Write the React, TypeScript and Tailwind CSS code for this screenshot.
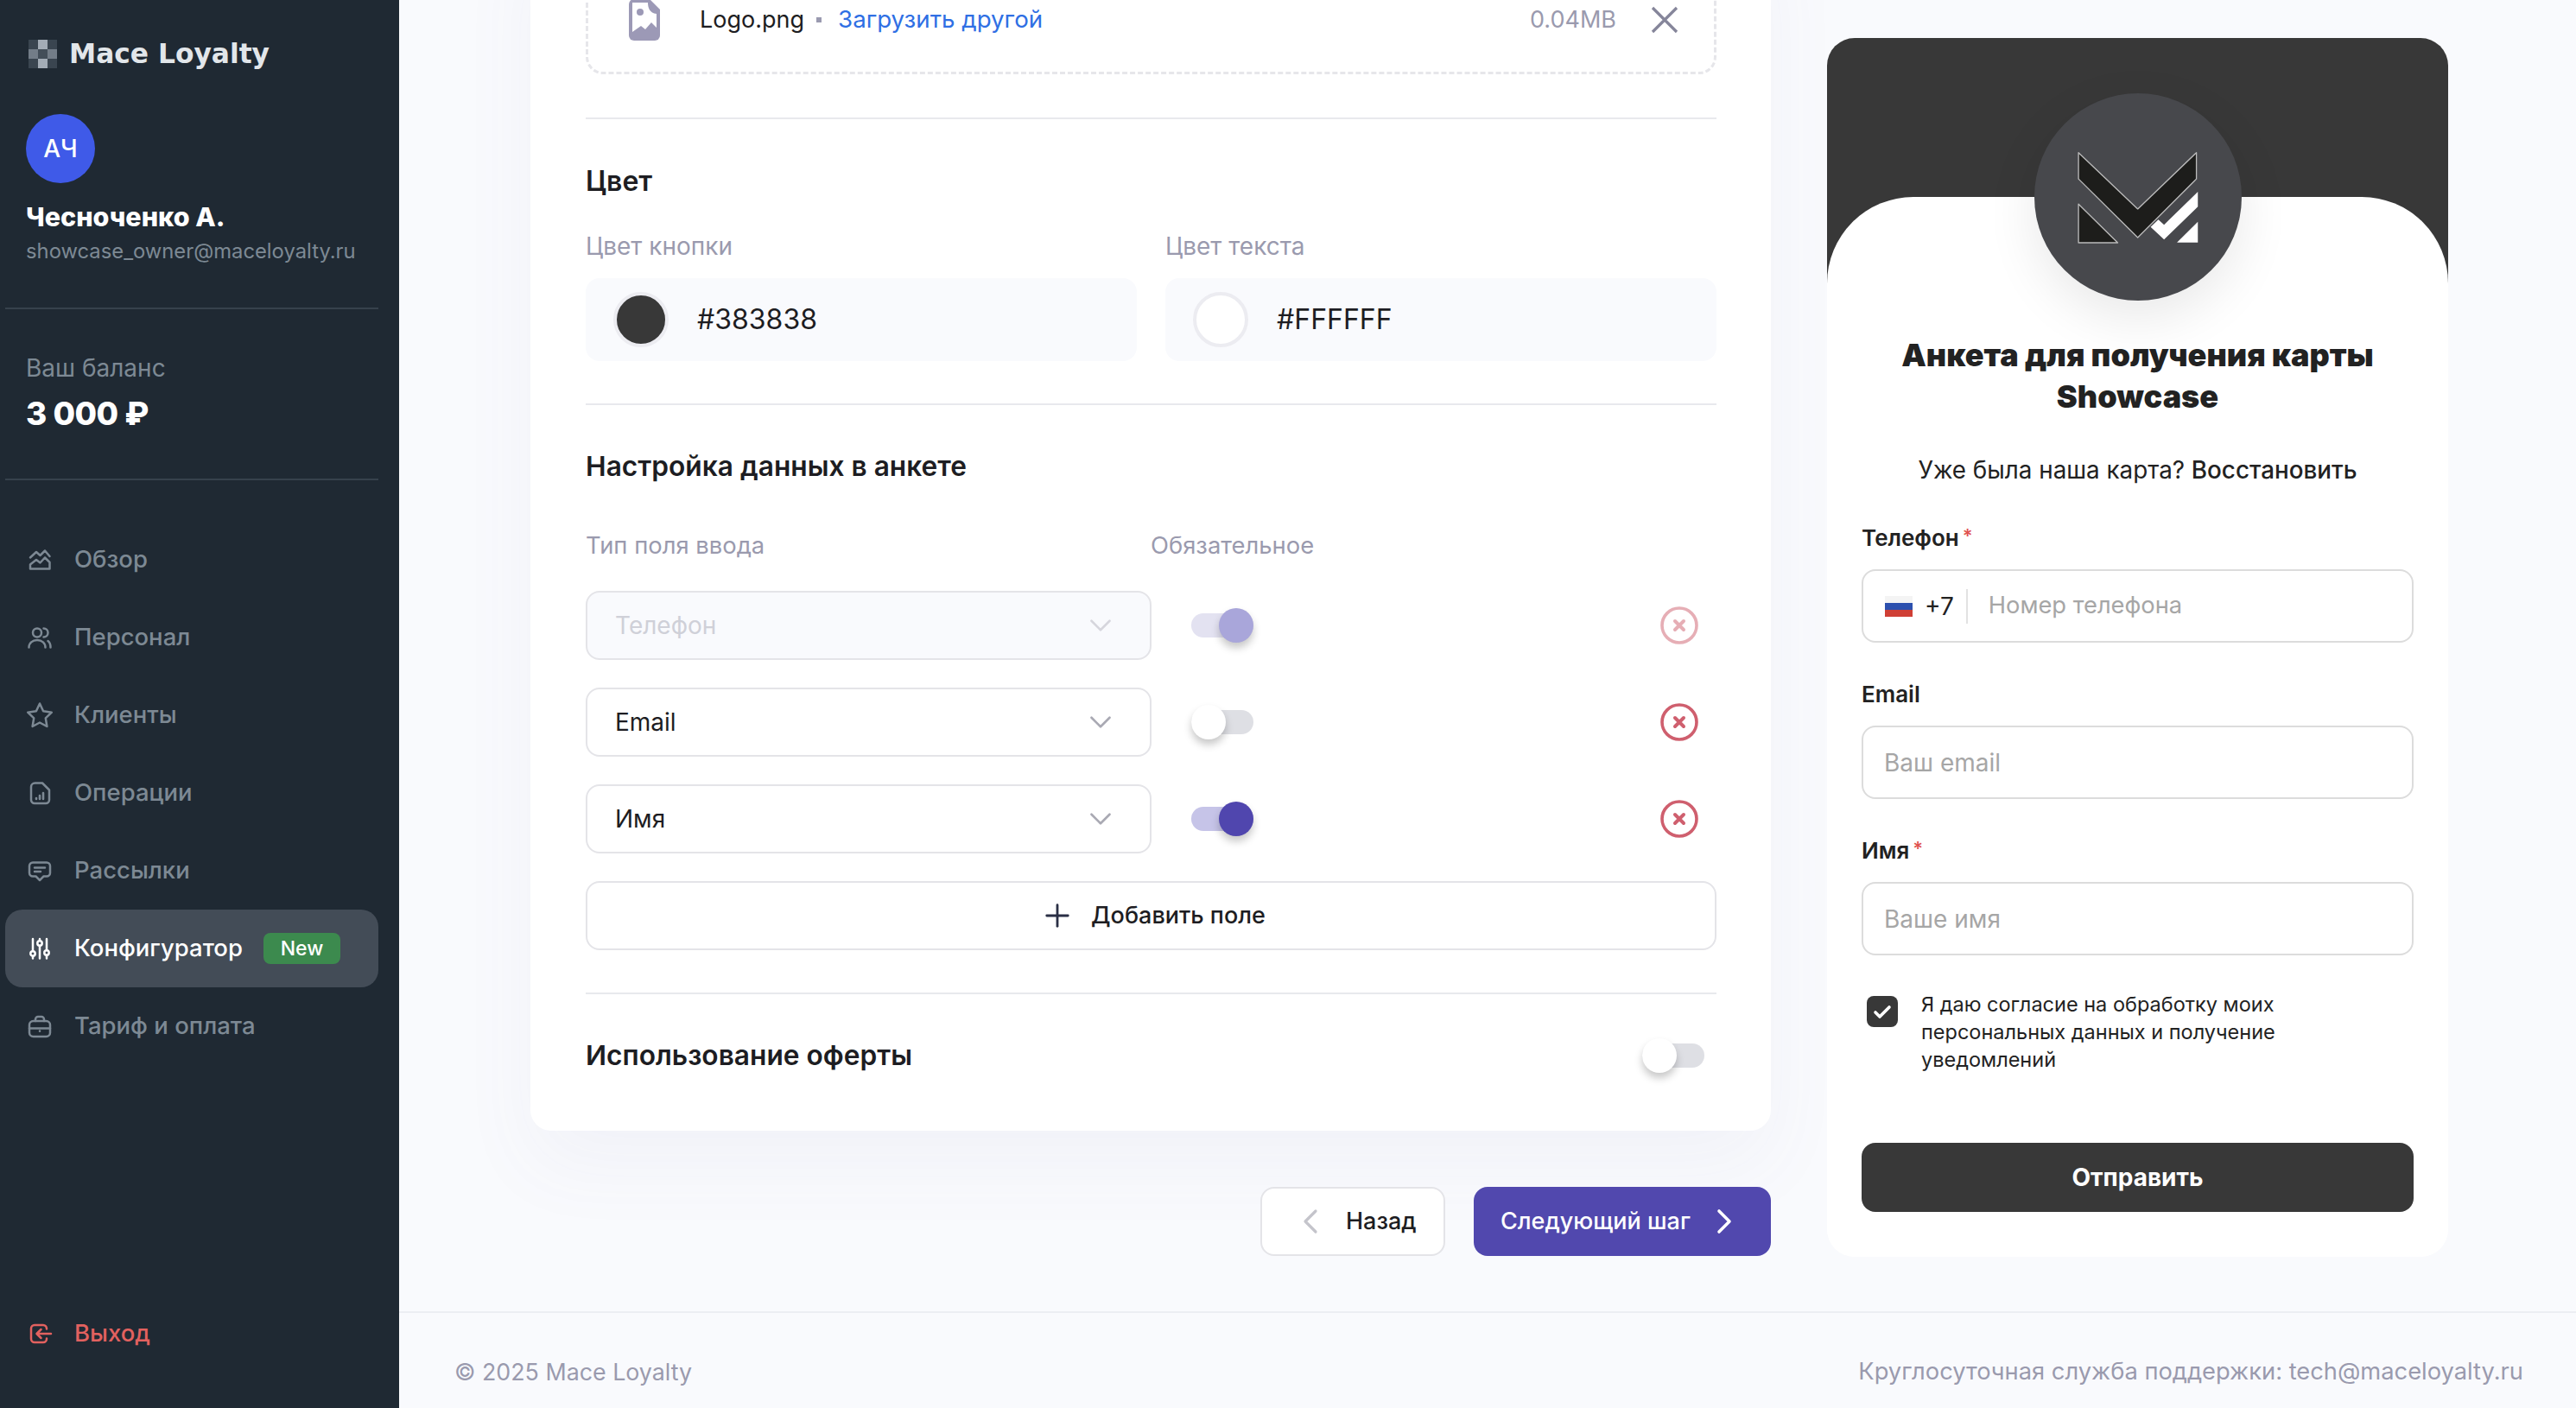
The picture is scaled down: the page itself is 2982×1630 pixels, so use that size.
import { ChevronDown, ChevronLeft, ChevronRight, Plus } from "lucide-react";
import type { ReactNode } from "react";

const IconBox = ({ children, className }: { children: ReactNode; className?: string }) => (
  <svg
    viewBox="0 0 28 28"
    fill="none"
    stroke="currentColor"
    strokeWidth="2.5"
    strokeLinecap="round"
    strokeLinejoin="round"
    className={`w-[28px] h-[28px] shrink-0 overflow-visible ${className ?? ""}`}
  >
    {children}
  </svg>
);

const navItems = [
  {
    label: "Обзор",
    icon: (
      <>
        <path d="M3 11.5l7-6.5 4.5 4L20 3.5l5.5 6.5" />
        <path d="M3 24.5h22.5V17l-5.5-5.5-5.5 6-4.5-3.5L3 19.5z" />
      </>
    ),
  },
  {
    label: "Персонал",
    icon: (
      <>
        <circle cx="11" cy="8.5" r="5" />
        <path d="M1.5 25.5c0-5 4-8.500 9.500-8.500s9.500 3.500 9.500 8.500" />
        <path d="M18.500 3.500a5 5 0 0 1 0 10" />
        <path d="M23.500 18c2 1.500 3 4 3 7.500" />
      </>
    ),
  },
  {
    label: "Клиенты",
    icon: <path d="M14 .5l4.100 8.800 9.700 1.400-7 6.700 1.600 9.600L14 22.500l-8.400 4.500 1.600-9.600-7-6.700 9.700-1.400z" />,
  },
  {
    label: "Операции",
    icon: (
      <>
        <path d="M8.500 2.500h8.500l8 8V22a4 4 0 0 1-4 4H8a4 4 0 0 1-4-4V7a4.500 4.500 0 0 1 4.500-4.500z" />
        <path d="M10 21v-1M14 21v-4M18 21v-7" strokeWidth="2.600" />
      </>
    ),
  },
  {
    label: "Рассылки",
    icon: (
      <>
        <path d="M6 4.500h16a4 4 0 0 1 4 4v8a4 4 0 0 1-4 4h-3.500L14 25l-4.500-4.500H6a4 4 0 0 1-4-4v-8a4 4 0 0 1 4-4z" />
        <path d="M8 10.500h12M8 15h7" />
      </>
    ),
  },
  {
    label: "Конфигуратор",
    active: true,
    icon: (
      <>
        <path d="M6 3v14M6 23v2.500M14 3v1M14 11v14.500M22 3v13M22 22v3.500" />
        <circle cx="6" cy="20" r="2.700" />
        <circle cx="14" cy="8" r="2.700" />
        <circle cx="22" cy="19" r="2.700" />
      </>
    ),
  },
  {
    label: "Тариф и оплата",
    icon: (
      <>
        <rect x="2" y="8" width="24" height="18" rx="4.500" />
        <path d="M9 8V6a3 3 0 0 1 3-3h4a3 3 0 0 1 3 3v2M2 16.500h24" />
        <path d="M14 19.500v.2" />
      </>
    ),
  },
];

const logoCells = [
  "bg-[#3a4550]", "bg-[#a3acb6]", "bg-[#3a4550]",
  "bg-[#737d88]", "bg-[#434e59]", "bg-[#737d88]",
  "bg-[#3a4550]", "bg-[#a3acb6]", "bg-[#3a4550]",
];

const Sidebar = () => (
  <aside className="w-[462px] h-full shrink-0 flex flex-col bg-[#1f2933]">
    <div className="ml-[33px] mt-[44px] h-[36px] flex items-center gap-[14px]">
      <div className="grid grid-cols-3 w-[33px] h-[33px]">
        {logoCells.map((cell, i) => (
          <div key={i} className={cell} />
        ))}
      </div>
      <span className="font-['DejaVu_Sans',sans-serif] text-[31.3px] font-bold text-[#e2e6ea]">Mace Loyalty</span>
    </div>
    <div className="ml-[30px] mt-[52px] w-[80px] h-[80px] rounded-full bg-[#3f5ae8] flex items-center justify-center text-[28px] font-medium text-white">
      АЧ
    </div>
    <div className="ml-[30px] mt-[20px] text-[30.5px] leading-[38px] font-extrabold text-white">Чесноченко А.</div>
    <div className="ml-[30px] mt-[6px] text-[23.8px] leading-[30px] text-[#7d8994]">showcase_owner@maceloyalty.ru</div>
    <div className="ml-[6px] mt-[50px] w-[432px] h-[2px] bg-[#36414c]" />
    <div className="ml-[30px] mt-[50px] text-[28px] leading-[36px] text-[#7d8994]">Ваш баланс</div>
    <div className="ml-[30px] mt-[12px] text-[37px] leading-[46px] font-extrabold tracking-[-0.5px] text-white">3 000 ₽</div>
    <div className="ml-[6px] mt-[52px] w-[432px] h-[2px] bg-[#36414c]" />
    <nav className="mt-[47px] flex flex-col">
      {navItems.map((item) => (
        <div
          key={item.label}
          className={`ml-[6px] w-[432px] h-[90px] pl-[26px] flex items-center gap-[26px] rounded-[20px] text-[27.5px] font-medium ${
            item.active ? "bg-[#434c57] text-white" : "text-[#7d8994]"
          }`}
        >
          <IconBox>{item.icon}</IconBox>
          <span>{item.label}</span>
          {item.active && (
            <span className="ml-[-2px] h-[36px] w-[89px] rounded-[8px] bg-[#3c8a4e] flex items-center justify-center text-[23px] text-white">
              New
            </span>
          )}
        </div>
      ))}
    </nav>
    <div className="mt-auto mb-[41px] ml-[6px] h-[90px] pl-[26px] flex items-center gap-[26px] text-[27.5px] font-medium text-[#e2615f]">
      <IconBox>
        <path d="M22 8.500V8a4 4 0 0 0-4-4H8a4 4 0 0 0-4 4v12a4 4 0 0 0 4 4h10a4 4 0 0 0 4-4v-.500" />
        <path d="M27 14H11M15.500 9l-5 5 5 5" />
      </IconBox>
      <span>Выход</span>
    </div>
  </aside>
);

const FileIcon = () => (
  <svg viewBox="0 0 36 48" className="w-[36px] h-[48px] shrink-0">
    <path fill="#9c99b6" d="M6 0h18l12 12v30a6 6 0 0 1-6 6H6a6 6 0 0 1-6-6V6a6 6 0 0 1 6-6z" />
    <path fill="#fff" d="M4 4h18c0 6 2 12 10 13v16l-6-6-7 8-5-4-10 7z" />
    <circle cx="13" cy="15" r="4" fill="#9c99b6" />
  </svg>
);

const Toggle = ({ state }: { state: "on" | "off" | "disabled" }) => (
  <div className="relative w-[72px] h-[40px] shrink-0">
    <div
      className={`absolute left-0 right-0 top-[6px] h-[28px] rounded-full ${
        state === "on" ? "bg-[#c6c4e8]" : state === "disabled" ? "bg-[#e3e2f1]" : "bg-[#dedfe4]"
      }`}
    />
    <div
      className={`absolute top-0 w-[40px] h-[40px] rounded-full shadow-[0_6px_10px_rgba(0,0,0,0.22)] ${
        state === "on"
          ? "right-0 bg-[#5046ae]"
          : state === "disabled"
            ? "right-0 bg-[#a9a6da]"
            : "left-0 bg-white"
      }`}
    />
  </div>
);

const RemoveIcon = ({ faded }: { faded?: boolean }) => (
  <svg
    viewBox="0 0 44 44"
    fill="none"
    stroke="#cf5f6e"
    strokeWidth="3.6"
    strokeLinecap="round"
    className={`w-[44px] h-[44px] shrink-0 ${faded ? "opacity-50" : ""}`}
  >
    <circle cx="22" cy="22" r="20" />
    <path d="M17 17l10 10M27 17L17 27" strokeWidth="4" />
  </svg>
);

const fieldRows: { label: string; toggle: "on" | "off" | "disabled"; disabled?: boolean }[] = [
  { label: "Телефон", toggle: "disabled", disabled: true },
  { label: "Email", toggle: "off" },
  { label: "Имя", toggle: "on" },
];

const Divider = ({ className }: { className: string }) => <div className={`h-[2px] bg-[#e8e9ed] ${className}`} />;

const SettingsCard = () => (
  <div className="mt-[-100px] w-[1436px] rounded-[24px] bg-white pl-[64px] pr-[63px] pt-[64px] pb-[67px] shadow-[0_40px_90px_rgba(90,90,150,0.05)]">
    <div className="h-[122px] pt-[32px] pl-[47px] pr-[41px] flex items-start rounded-[20px] border-[3px] border-dashed border-[#e6e6ea]">
      <div className="w-full h-[48px] flex items-center text-[28px]">
        <FileIcon />
        <span className="ml-[46px] text-[27px] text-[#1d1d22]">Logo.png</span>
        <span className="ml-[14px] w-[6px] h-[6px] bg-[#9a9ab0]" />
        <span className="ml-[19px] text-[27.7px] text-[#2f6fe4]">Загрузить другой</span>
        <span className="ml-auto text-[27px] text-[#9a9aae]">0.04MB</span>
        <svg viewBox="0 0 32 32" fill="none" stroke="#85859a" strokeWidth="3.200" className="ml-[40px] w-[32px] h-[32px]">
          <path d="M2 2l28 28M30 2L2 30" />
        </svg>
      </div>
    </div>
    <Divider className="mt-[50px]" />
    <h2 className="mt-[52px] text-[32px] leading-[40px] font-semibold text-[#1d1d22]">Цвет</h2>
    <div className="mt-[38px] grid grid-cols-2 gap-x-[33px] text-[28px] leading-[34px] text-[#9a9aae]">
      <span>Цвет кнопки</span>
      <span>Цвет текста</span>
    </div>
    <div className="mt-[20px] grid grid-cols-2 gap-x-[33px]">
      {[
        { value: "#383838", swatch: "bg-[#383838]" },
        { value: "#FFFFFF", swatch: "bg-white" },
      ].map((color) => (
        <div key={color.value} className="h-[96px] px-[32px] flex items-center gap-[33px] rounded-[16px] bg-[#f9fafd]">
          <div className={`w-[64px] h-[64px] rounded-full border-[4px] border-[#ececf1] ${color.swatch}`} />
          <span className="text-[32px] text-[#1d1d22]">{color.value}</span>
        </div>
      ))}
    </div>
    <Divider className="mt-[49px]" />
    <h2 className="mt-[51px] text-[31.7px] leading-[40px] font-semibold text-[#1d1d22]">Настройка данных в анкете</h2>
    <div className="mt-[54px] flex text-[27.4px] leading-[34px] text-[#9a9aae]">
      <span className="w-[654px]">Тип поля ввода</span>
      <span>Обязательное</span>
    </div>
    <div className="mt-[36px] flex flex-col gap-[32px]">
      {fieldRows.map((row) => (
        <div key={row.label} className="flex items-center pr-[21px]">
          <div
            className={`w-[655px] h-[80px] pl-[32px] pr-[36px] flex items-center justify-between rounded-[16px] border-2 border-[#e4e4e8] text-[28px] ${
              row.disabled ? "bg-[#f9fafd] text-[#cfd0d8]" : "bg-white text-[#1d1d22]"
            }`}
          >
            <span>{row.label}</span>
            <ChevronDown
              size={42}
              strokeWidth={1.5}
              className={row.disabled ? "text-[#d6d6dd]" : "text-[#a9a9b3]"}
            />
          </div>
          <div className="ml-[46px]">
            <Toggle state={row.toggle} />
          </div>
          <div className="ml-auto">
            <RemoveIcon faded={row.disabled} />
          </div>
        </div>
      ))}
      <div className="h-[80px] flex items-center justify-center gap-[18px] rounded-[16px] border-2 border-[#e4e4e8] text-[27px] font-medium text-[#1d1d22]">
        <Plus size={42} strokeWidth={1.6} className="ml-[3px] text-[#2a2f45]" />
        <span>Добавить поле</span>
      </div>
    </div>
    <Divider className="mt-[49px]" />
    <div className="mt-[51px] h-[40px] flex items-center justify-between pr-[14px]">
      <span className="text-[31.7px] font-semibold text-[#1d1d22]">Использование оферты</span>
      <Toggle state="off" />
    </div>
  </div>
);

const StepButtons = () => (
  <div className="mt-[65px] flex justify-end gap-[33px] text-[27px] font-medium">
    <div className="w-[214px] h-[80px] pl-[32px] flex items-center gap-[17px] rounded-[16px] border-2 border-[#e4e4e8] bg-white text-[#1d1d22]">
      <ChevronLeft size={48} strokeWidth={1.6} className="text-[#c4c4cb]" />
      <span>Назад</span>
    </div>
    <div className="w-[344px] h-[80px] pl-[31px] flex items-center gap-[15px] rounded-[16px] bg-[#5148ae] text-white">
      <span>Следующий шаг</span>
      <ChevronRight size={48} strokeWidth={1.8} />
    </div>
  </div>
);

const FormInput = ({ placeholder }: { placeholder: string }) => (
  <input
    readOnly
    placeholder={placeholder}
    className="mt-[20px] w-full h-[85px] px-[24px] rounded-[16px] border-2 border-[#dcdcdc] bg-white text-[28px] outline-none placeholder:text-[#a6a6a6]"
  />
);

const Label = ({ text, required }: { text: string; required?: boolean }) => (
  <div className="text-[26px] leading-[32px] font-semibold text-[#222]">
    {text}
    {required && <sup className="ml-[4px] top-[-4px] text-[22px] text-[#e0524f]">*</sup>}
  </div>
);

const PreviewCard = () => (
  <div className="mt-[44px] w-[719px] h-[1411px] shrink-0 rounded-[32px] overflow-hidden bg-white">
    <div className="h-[284px] bg-[#383838]" />
    <div className="relative mt-[-100px] h-[1227px] rounded-t-[100px] bg-white px-[40px] pt-[159px]">
      <div className="absolute left-[240px] top-[-120px] w-[240px] h-[240px] rounded-full bg-[#47484c] flex items-center justify-center shadow-[0_20px_60px_rgba(0,0,0,0.09)]">
        <svg viewBox="225 250 422 326" className="w-[140px] h-[108px]">
          <path
            d="M228 258l207 197 205-197v92L435 555 228 350z"
            fill="#1d1d1b"
            stroke="#bbb"
            strokeWidth="4"
            strokeLinejoin="round"
          />
          <path d="M228 438l137 135H228z" fill="#1d1d1b" stroke="#bbb" strokeWidth="4" strokeLinejoin="round" />
          <path d="M645 395v52L527 562l-47-44 27-26 20 18z" fill="#fff" />
          <path d="M645 500v72h-73z" fill="#fff" />
        </svg>
      </div>
      <h1 className="text-center text-[36px] leading-[48px] font-black text-[#222]">
        Анкета для получения карты
        <br />
        Showcase
      </h1>
      <p className="mt-[44px] text-center text-[27.8px] leading-[34px] text-[#222]">
        Уже была наша карта? <span className="font-medium">Восстановить</span>
      </p>
      <div className="mt-[46px]">
        <Label text="Телефон" required />
      </div>
      <div className="mt-[20px] h-[85px] pl-[25px] flex items-center rounded-[16px] border-2 border-[#dcdcdc] text-[28px]">
        <svg viewBox="0 0 32 24" className="w-[32px] h-[24px] shrink-0">
          <path fill="#f4f4f4" d="M0 0h32v8H0z" />
          <path fill="#2c50ae" d="M0 8h32v8H0z" />
          <path fill="#cf3f35" d="M0 16h32v8H0z" />
        </svg>
        <span className="ml-[14px] text-[#222]">+7</span>
        <div className="ml-[14px] w-[2px] h-[40px] bg-[#e2e2e2]" />
        <span className="ml-[24px] text-[27.3px] text-[#a6a6a6]">Номер телефона</span>
      </div>
      <div className="mt-[44px]">
        <Label text="Email" />
      </div>
      <FormInput placeholder="Ваш email" />
      <div className="mt-[44px]">
        <Label text="Имя" required />
      </div>
      <FormInput placeholder="Ваше имя" />
      <div className="mt-[41px] flex items-start text-[23.5px] leading-[32px] text-[#222]">
        <div className="ml-[6px] mt-[6px] w-[36px] h-[36px] rounded-[8px] bg-[#383838] flex items-center justify-center shrink-0">
          <svg viewBox="0 0 24 24" fill="none" stroke="#fff" strokeWidth="3.600" strokeLinecap="round" strokeLinejoin="round" className="w-[24px] h-[24px]">
            <path d="M4 13l5 5L20 7" />
          </svg>
        </div>
        <p className="ml-[27px] w-[430px]">Я даю согласие на обработку моих персональных данных и получение уведомлений</p>
      </div>
      <div className="mt-[80px] h-[80px] rounded-[16px] bg-[#383838] flex items-center justify-center text-[28px] font-bold text-white">
        Отправить
      </div>
    </div>
  </div>
);

export default function App() {
  return (
    <div className="w-[2982px] h-[1630px] flex overflow-hidden bg-[#f9fafd] font-[Inter,sans-serif]">
      <Sidebar />
      <main className="flex-1 min-w-0 flex flex-col">
        <div className="flex-1 min-h-0 flex items-start pl-[152px] gap-[65px]">
          <div className="w-[1436px] shrink-0">
            <SettingsCard />
            <StepButtons />
          </div>
          <PreviewCard />
        </div>
        <footer className="h-[112px] shrink-0 pt-[26px] pl-[64px] pr-[61px] flex items-center justify-between border-t-2 border-[#eceef3] text-[#9a9aae]">
          <span className="text-[26.8px]">© 2025 Mace Loyalty</span>
          <span className="text-[27.3px]">Круглосуточная служба поддержки: tech@maceloyalty.ru</span>
        </footer>
      </main>
    </div>
  );
}
